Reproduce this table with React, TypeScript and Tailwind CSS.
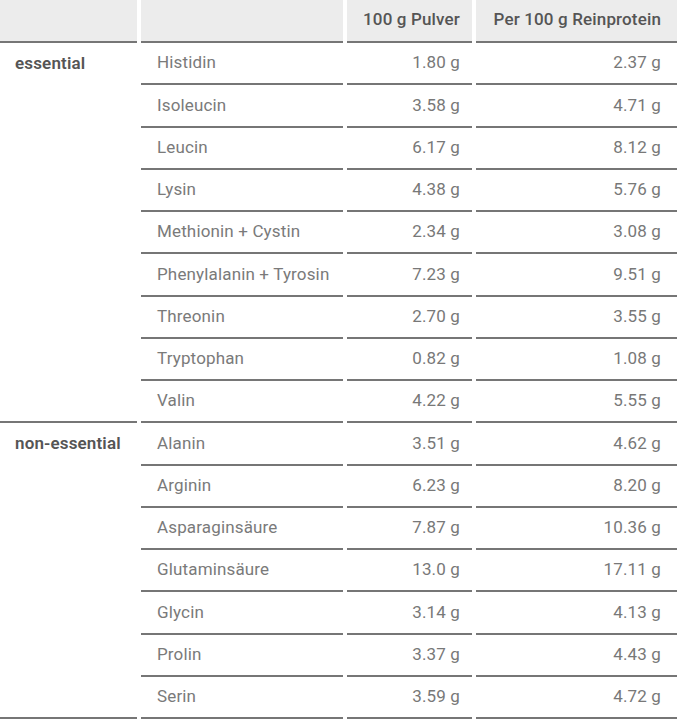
const essential = [
  ["Histidin", "1.80 g", "2.37 g"],
  ["Isoleucin", "3.58 g", "4.71 g"],
  ["Leucin", "6.17 g", "8.12 g"],
  ["Lysin", "4.38 g", "5.76 g"],
  ["Methionin + Cystin", "2.34 g", "3.08 g"],
  ["Phenylalanin + Tyrosin", "7.23 g", "9.51 g"],
  ["Threonin", "2.70 g", "3.55 g"],
  ["Tryptophan", "0.82 g", "1.08 g"],
  ["Valin", "4.22 g", "5.55 g"],
];

const nonEssential = [
  ["Alanin", "3.51 g", "4.62 g"],
  ["Arginin", "6.23 g", "8.20 g"],
  ["Asparaginsäure", "7.87 g", "10.36 g"],
  ["Glutaminsäure", "13.0 g", "17.11 g"],
  ["Glycin", "3.14 g", "4.13 g"],
  ["Prolin", "3.37 g", "4.43 g"],
  ["Serin", "3.59 g", "4.72 g"],
];

const line = "border-b-2 border-[#767676]";

function Group({ label, rows }: { label: string; rows: string[][] }) {
  return (
    <>
      <div
        className={`${line} pl-[15px] pt-[8px] font-semibold text-[#555]`}
        style={{ gridRow: `span ${rows.length} / span ${rows.length}` }}
      >
        {label}
      </div>
      {rows.map(([name, a, b]) => (
        <div key={name} className="contents">
          <div className={`${line} col-start-2 flex h-[42.25px] items-center pl-[16px] text-[#7a7a7a]`}>
            {name}
          </div>
          <div className={`${line} flex items-center justify-end pr-[12px] text-[#787878]`}>{a}</div>
          <div className={`${line} flex items-center justify-end pr-[16px] text-[#787878]`}>{b}</div>
        </div>
      ))}
    </>
  );
}

export default function App() {
  return (
    <div
      className="w-[677px] bg-white text-[17px] tracking-[0.15px]"
      style={{ fontFamily: "Roboto, 'Liberation Sans', sans-serif" }}
    >
      <div className="grid grid-cols-[137px_202px_125px_201px] gap-x-[4px]">
        <div className={`${line} h-[43px] bg-[#ececec]`} />
        <div className={`${line} h-[43px] bg-[#ececec]`} />
        <div className={`${line} flex items-center justify-end bg-[#ececec] pb-[2px] pr-[12px] font-medium text-[#555]`}>
          100 g Pulver
        </div>
        <div className={`${line} flex items-center justify-end bg-[#ececec] pb-[2px] pr-[16px] font-medium text-[#555]`}>
          Per 100 g Reinprotein
        </div>
        <Group label="essential" rows={essential} />
        <Group label="non-essential" rows={nonEssential} />
      </div>
    </div>
  );
}
